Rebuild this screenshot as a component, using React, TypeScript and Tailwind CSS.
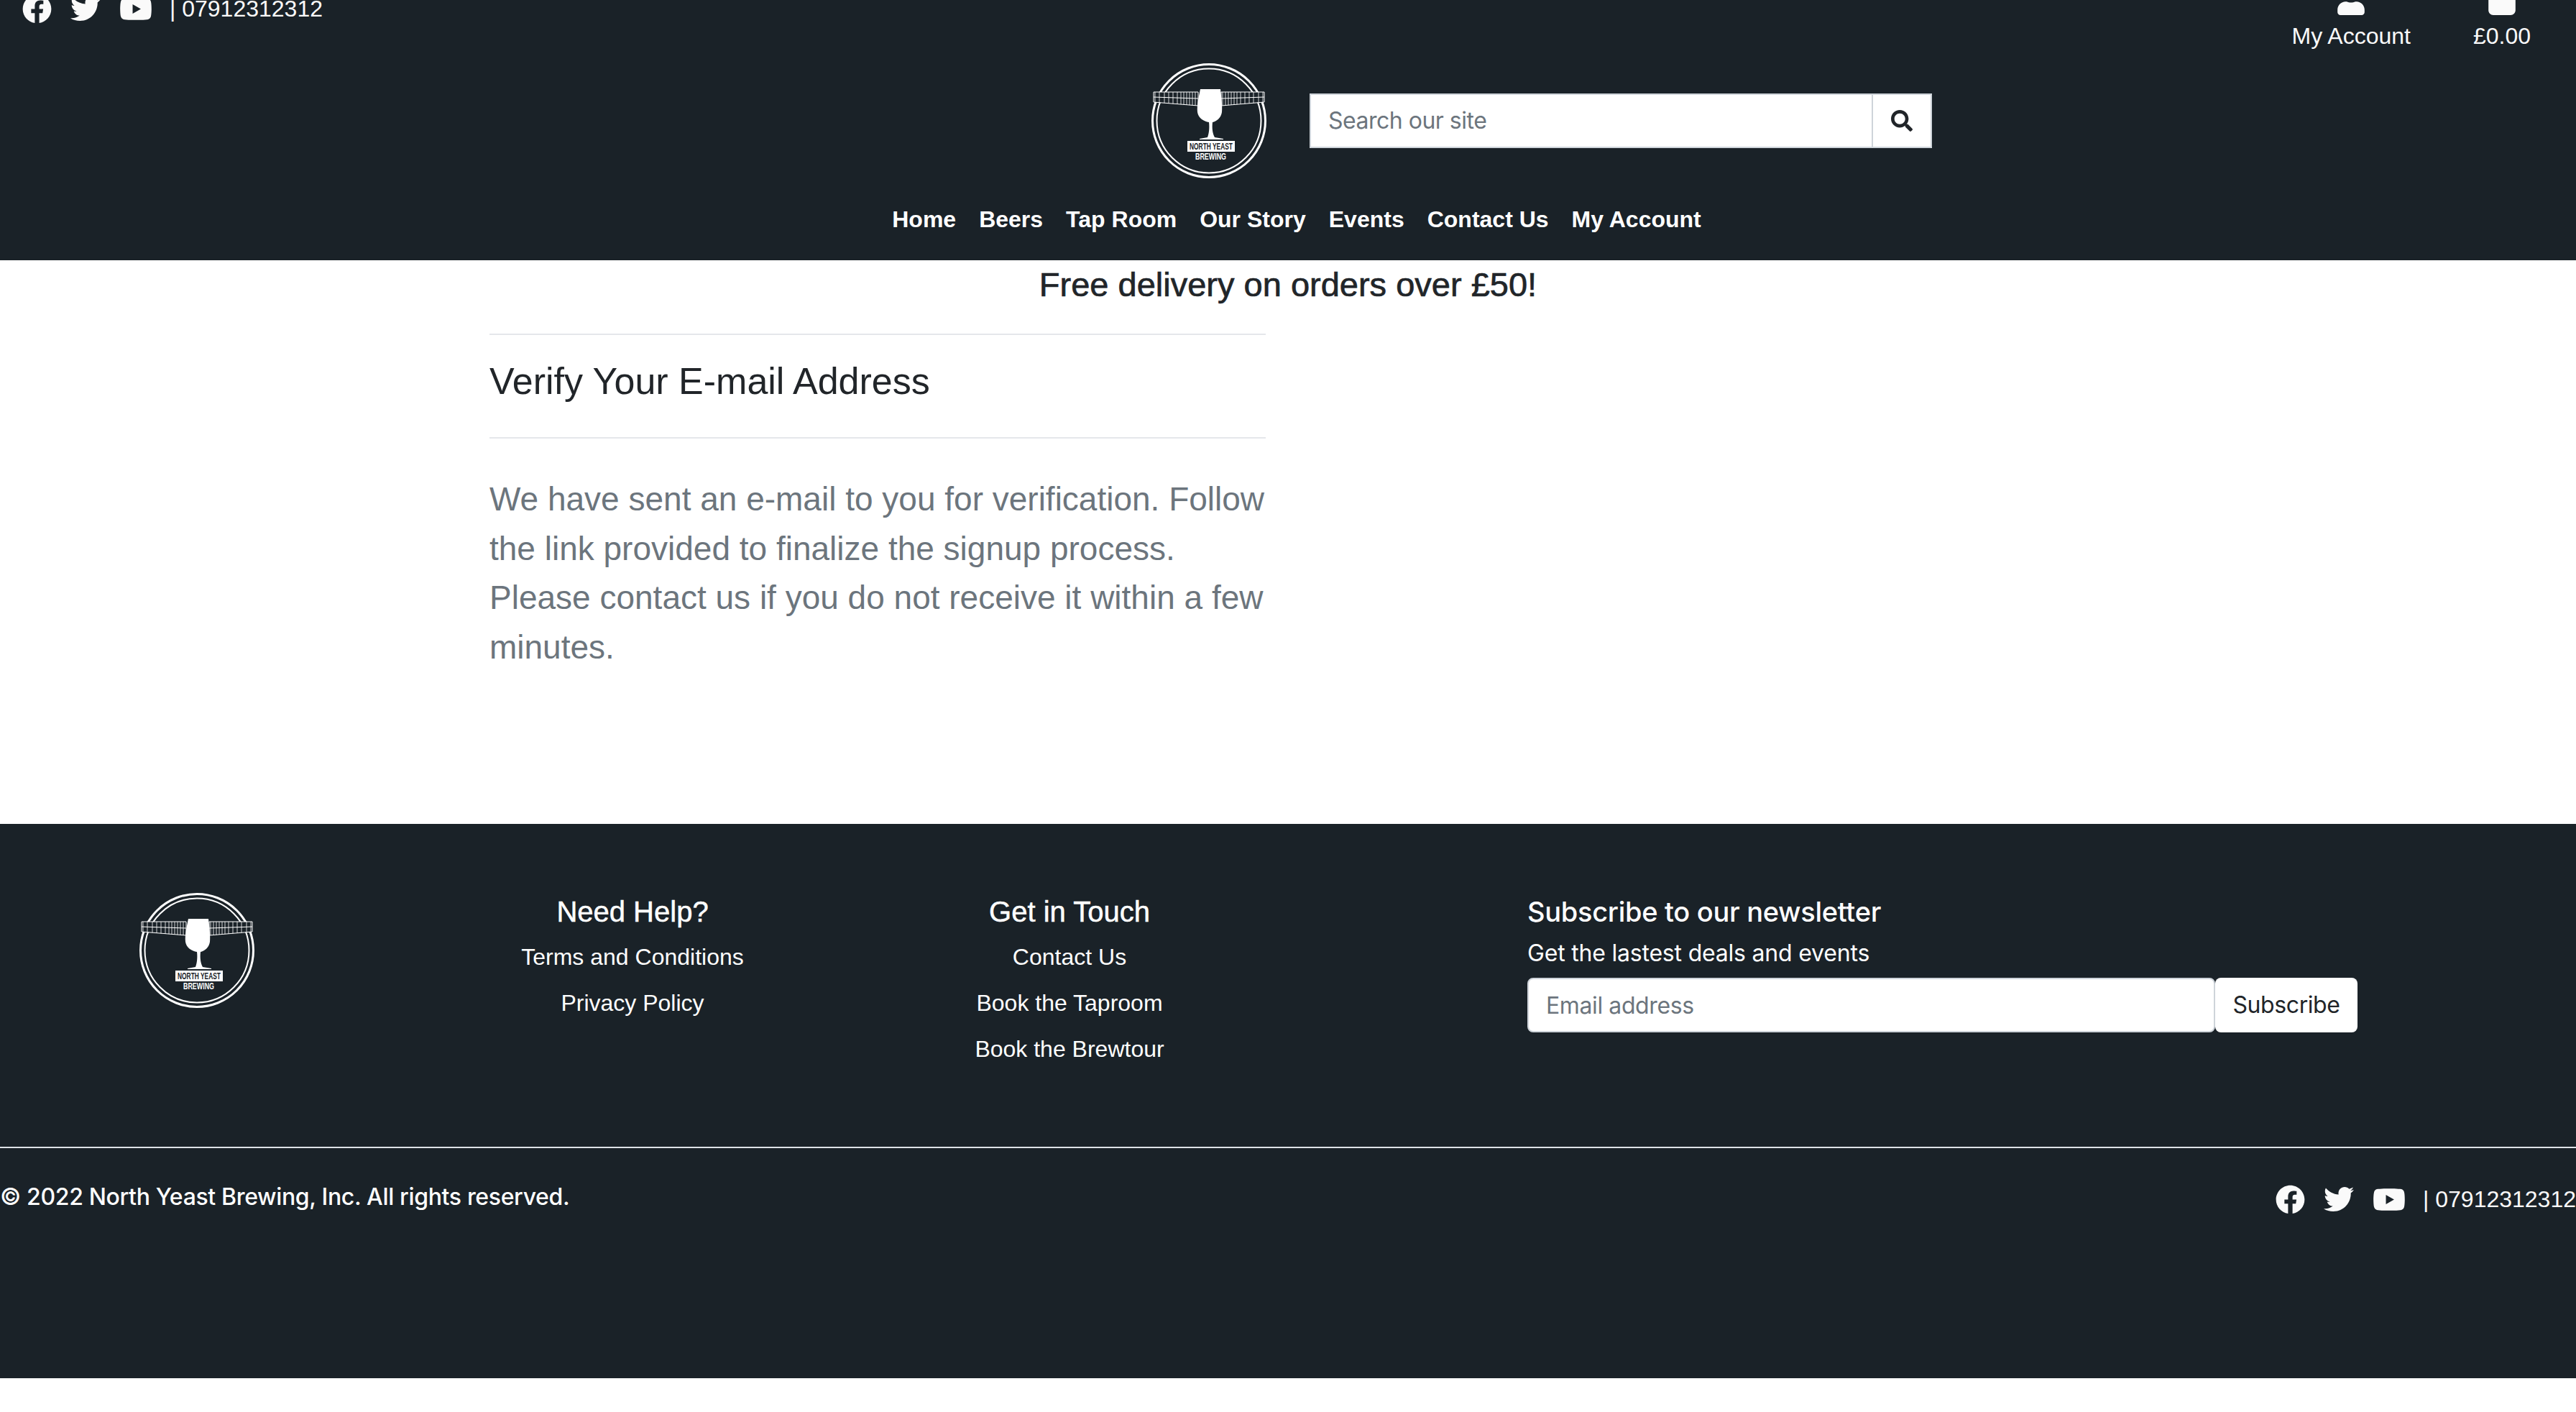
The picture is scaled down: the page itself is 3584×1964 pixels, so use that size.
import { FaFacebook, FaTwitter, FaYoutube, FaUser, FaShoppingBag, FaSearch } from 'react-icons/fa';

const BG = '#1a2228';

function Logo() {
  const verticals = [5, 11, 18, 24, 30, 36, 41, 45, 49, 53, 57, 61];
  return (
    <svg viewBox="0 0 160 160" className="w-[160px] h-[160px] shrink-0">
      <circle cx="80" cy="80" r="78.5" fill="none" stroke="#fff" strokeWidth="3" />
      <circle cx="80" cy="80" r="72.5" fill="none" stroke="#fff" strokeWidth="2" />
      {/* band */}
      <path d="M3 40 L65 40 L65 59 L3 54 Z" fill={BG} stroke="#fff" strokeWidth="1" />
      <path d="M157 40 L97 40 L97 59 L157 54 Z" fill={BG} stroke="#fff" strokeWidth="1" />
      <path d="M3 47 L65 49 M97 49 L157 47" stroke="#fff" strokeWidth="1" />
      {verticals.map(x => (
        <g key={x}>
          <line x1={x} y1="40" x2={x} y2={54 + (x * 5) / 62} stroke="#fff" strokeWidth="0.8" />
          <line x1={160 - x} y1="40" x2={160 - x} y2={54 + (x * 5) / 62} stroke="#fff" strokeWidth="0.8" />
        </g>
      ))}
      {/* glass */}
      <path d="M68 36 L96 36 C97 46 99 58 98 68 C97 76 90 81 85 82 C84 90 85 98 88 103 L100 105 L100 106 L67 106 L67 105 L78 103 C80 98 81 90 80 82 C73 81 65 76 64 68 C63 58 66 46 68 36 Z" fill="#fff" />
      {/* name */}
      <rect x="50" y="108" width="66" height="15" fill="#fff" />
      <text x="83" y="120" textAnchor="middle" fontSize="12" fontWeight="700" fill={BG} textLength="60" lengthAdjust="spacingAndGlyphs" fontFamily="'Liberation Sans', sans-serif">NORTH YEAST</text>
      <text x="82.5" y="134" textAnchor="middle" fontSize="12" fontWeight="700" fill="#fff" textLength="43" lengthAdjust="spacingAndGlyphs" fontFamily="'Liberation Sans', sans-serif">BREWING</text>
    </svg>
  );
}

function Socials() {
  return (
    <div className="flex items-center text-[32px] leading-[48px] text-[#fafafa] font-['Liberation_Sans',sans-serif]">
      <FaFacebook className="w-[41px] h-[41px]" />
      <FaTwitter className="w-[42px] h-[42px] ml-[26px]" />
      <FaYoutube className="w-[46px] h-[41px] ml-[26px]" />
      <span className="ml-[24px] whitespace-nowrap">| 07912312312</span>
    </div>
  );
}

export default function App() {
  const nav = ['Home', 'Beers', 'Tap Room', 'Our Story', 'Events', 'Contact Us', 'My Account'];
  return (
    <div className="h-[1964px] overflow-hidden bg-white font-['Liberation_Sans',sans-serif]">
      {/* Header */}
      <header className="flow-root h-[362px] bg-[#1a2228] text-white">
        <div className="flex justify-between items-start -mt-[12px] pl-[31px] pr-[63px]">
          <Socials />
          <div className="flex gap-[87px] text-[32px] leading-[48px] text-[#fafafa]">
            <div className="flex flex-col items-center">
              <FaUser className="w-[38px] h-[43px] -mt-[10px]" />
              <span className="mt-[5px]">My Account</span>
            </div>
            <div className="flex flex-col items-center">
              <FaShoppingBag className="w-[38px] h-[43px] -mt-[10px]" />
              <span className="mt-[5px]">£0.00</span>
            </div>
          </div>
        </div>
        <div className="flex items-center gap-[60px] pl-[1602px] mt-[14px]">
          <Logo />
          <div className="flex w-[866px] h-[76px] bg-white border-2 border-[#ced4da]">
            <input
              placeholder="Search our site"
              className="flex-1 min-w-0 px-[24px] text-[32px] tracking-[-0.5px] text-[#212529] placeholder:text-[#6c757d] font-['Inter',sans-serif] outline-none"
            />
            <button className="w-[82px] flex items-center justify-center border-l-2 border-[#ced4da] text-[#212529]">
              <FaSearch className="w-[30px] h-[30px]" />
            </button>
          </div>
        </div>
        <nav className="flex justify-center gap-[32px] pl-[24px] mt-[33px] text-[32px] leading-[48px] font-bold">
          {nav.map(item => (
            <a key={item}>{item}</a>
          ))}
        </nav>
      </header>

      {/* Main */}
      <main className="h-[784px]">
        <h4 className="text-center text-[47px] leading-[68px] text-[#212529] [-webkit-text-stroke:0.7px_#212529]">Free delivery on orders over £50!</h4>
        <div className="w-[1080px] ml-[681px] mt-[34px]">
          <div className="border-t-2 border-[#e5e7eb] h-[144px] pb-[14px] flex items-center">
            <h3 className="text-[52px] leading-[68px] text-[#212529]">Verify Your E-mail Address</h3>
          </div>
          <p className="border-t-2 border-[#e5e7eb] pt-[50px] text-[46px] leading-[68.6px] text-[#6c757d]">
            We have sent an e-mail to you for verification. Follow the link provided to finalize the signup process. Please contact us if you do not receive it within a few minutes.
          </p>
        </div>
      </main>

      {/* Footer */}
      <footer className="h-[771px] bg-[#1a2228] text-white">
        <div className="h-[449px] flex pt-[94px]">
          <div className="ml-[194px] mt-[2px]">
            <Logo />
          </div>
          <div className="w-[608px] ml-[222px] flex flex-col items-center">
            <h5 className="text-[40px] leading-[56px] [-webkit-text-stroke:0.5px_#fff]">Need Help?</h5>
            <ul className="mt-[3px] text-[32px] leading-[64px] text-center">
              <li>Terms and Conditions</li>
              <li>Privacy Policy</li>
            </ul>
          </div>
          <div className="w-[608px] flex flex-col items-center">
            <h5 className="text-[40px] leading-[56px] [-webkit-text-stroke:0.5px_#fff]">Get in Touch</h5>
            <ul className="mt-[3px] text-[32px] leading-[64px] text-center">
              <li>Contact Us</li>
              <li>Book the Taproom</li>
              <li>Book the Brewtour</li>
            </ul>
          </div>
          <div className="ml-[333px] w-[1155px] font-['Inter',sans-serif]">
            <h5 className="text-[38px] leading-[56px] font-medium tracking-[-0.3px]">Subscribe to our newsletter</h5>
            <p className="mt-[6px] text-[32px] leading-[48px] tracking-[-0.2px]">Get the lastest deals and events</p>
            <div className="flex mt-[10px]">
              <input
                placeholder="Email address"
                className="w-[957px] h-[76px] px-[24px] bg-white rounded-[8px] border-2 border-[#ced4da] text-[32px] tracking-[-0.4px] placeholder:text-[#6c757d] outline-none"
              />
              <button className="w-[198px] h-[76px] bg-white rounded-[8px] text-[#212529] text-[32px] tracking-[-0.4px]">Subscribe</button>
            </div>
          </div>
        </div>
        <div className="border-t-2 border-[#dee2e6] flex justify-between items-start pt-[44px]">
          <span className="font-['Inter',sans-serif] text-[32px] leading-[48px] font-medium tracking-[-0.35px]">© 2022 North Yeast Brewing, Inc. All rights reserved.</span>
          <div className="mt-[3px]">
            <Socials />
          </div>
        </div>
      </footer>
    </div>
  );
}
